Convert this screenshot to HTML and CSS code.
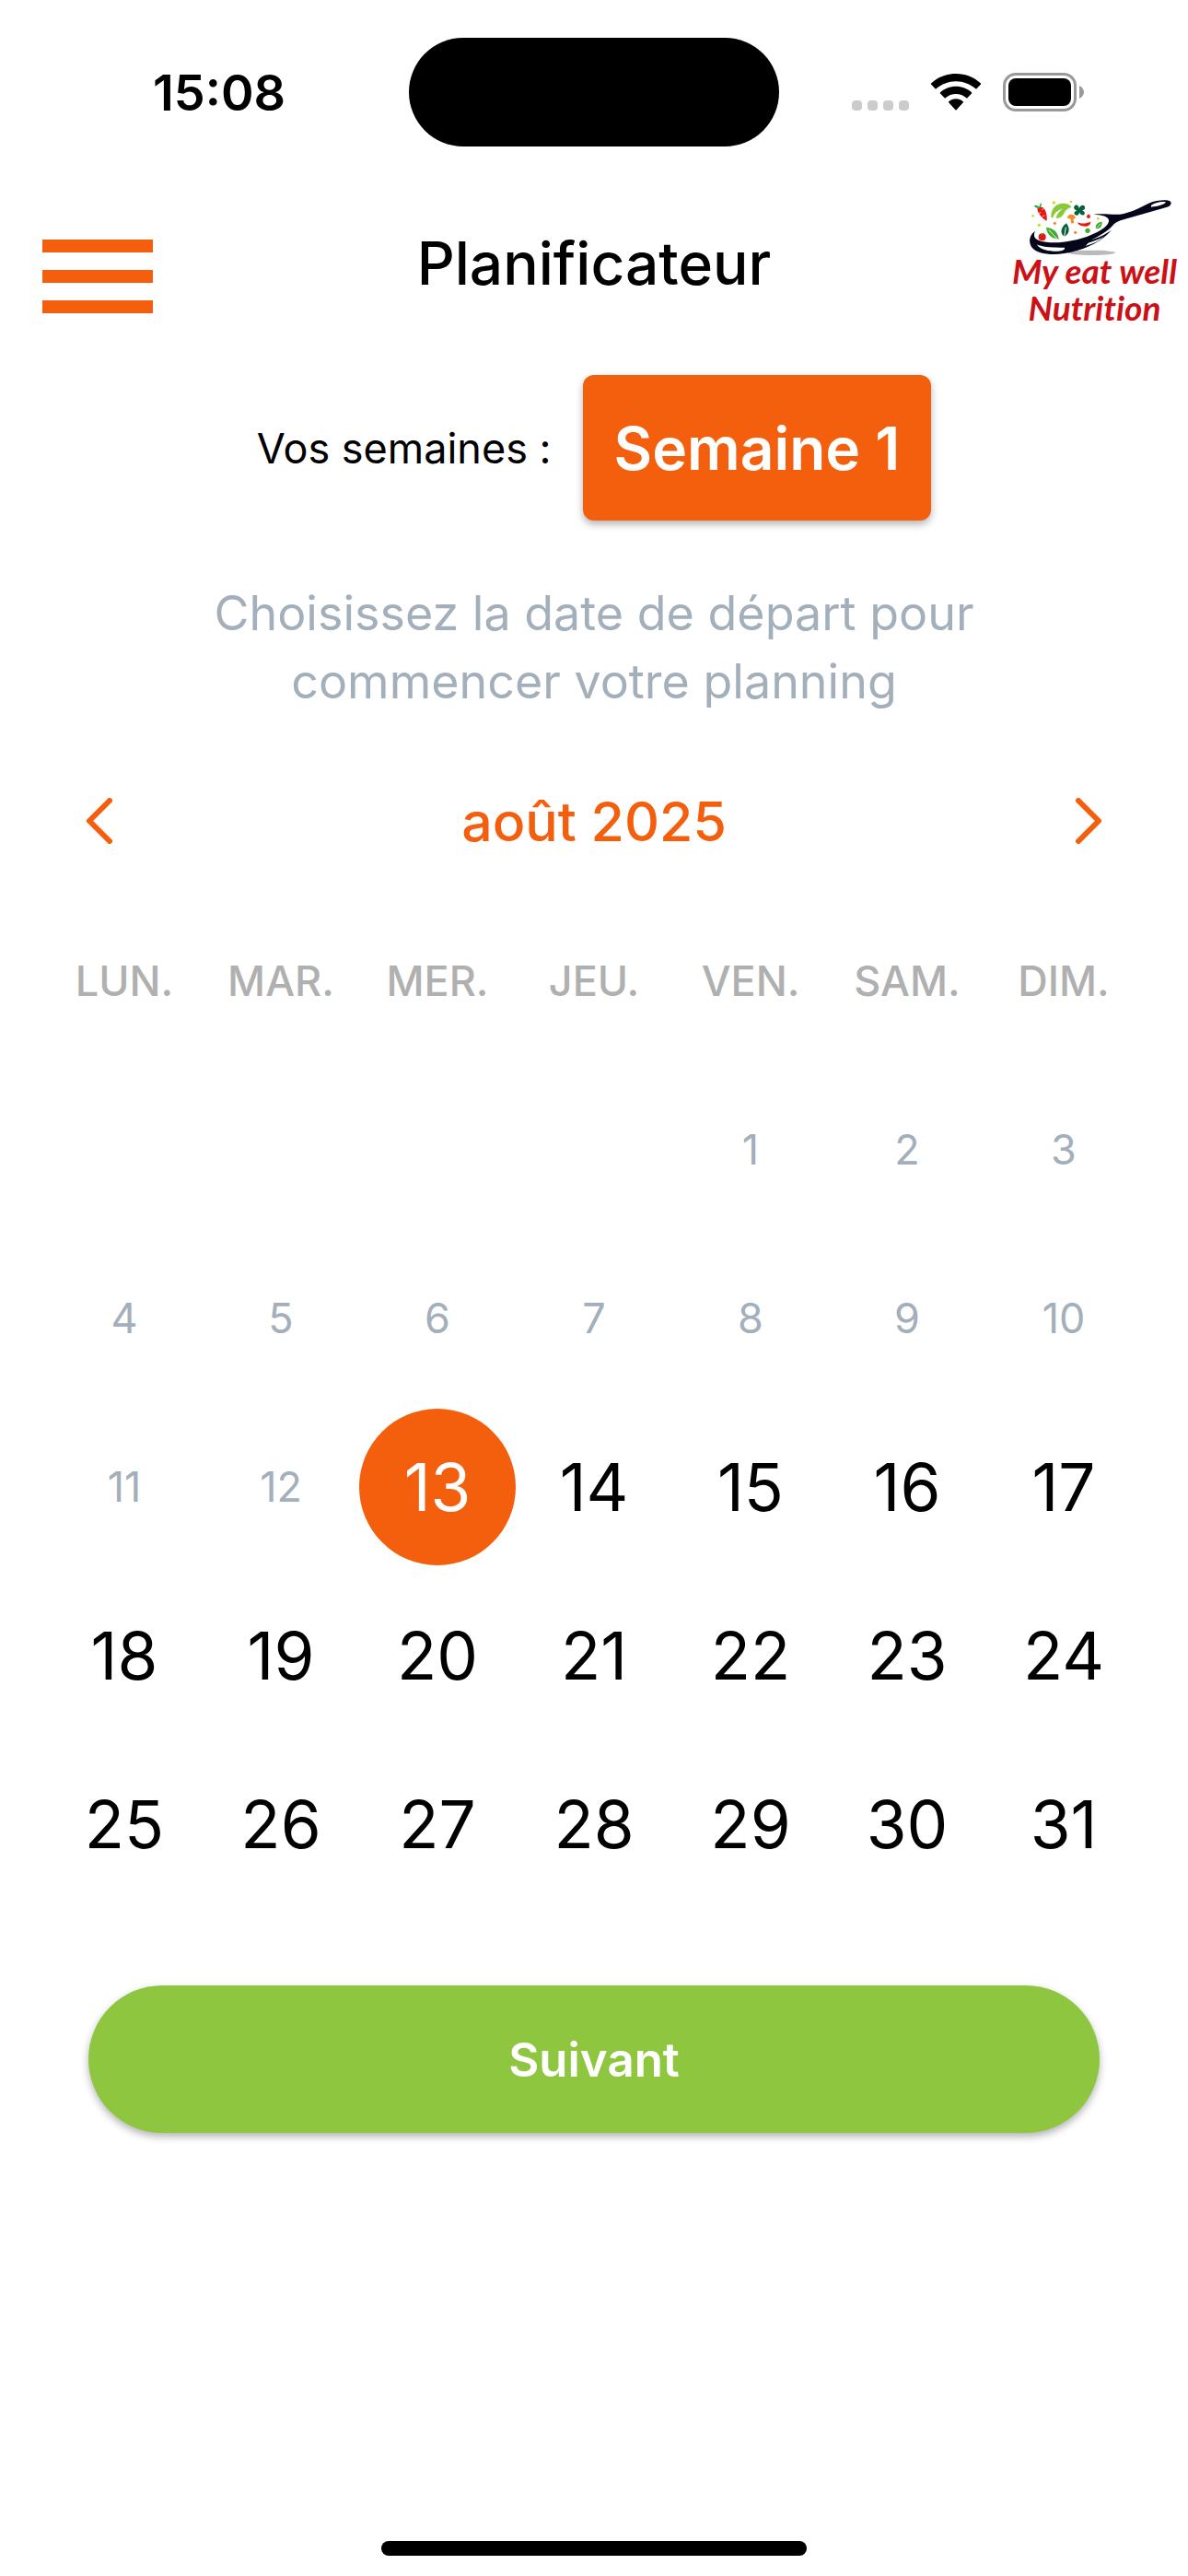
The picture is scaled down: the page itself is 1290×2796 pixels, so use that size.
FILE: index.html
```html
<!DOCTYPE html>
<html lang="fr">
    <head>
        <meta charset="UTF-8">
        <meta name="viewport" content="width=device-width, initial-scale=1">
        <title>Planificateur</title>
        <link rel="stylesheet" href="styles.css">
    </head>

    <body>
        <div class="statusbar">
            <span class="time">15:08</span>
            <div class="island"></div>
            <div class="status-icons">
                <svg class="signal" width="62" height="12" viewBox="0 0 62 12">
                    <rect x="0" width="11" height="11" rx="4"/>
                    <rect x="17" width="11" height="11" rx="4"/>
                    <rect x="34" width="11" height="11" rx="4"/>
                    <rect x="51" width="11" height="11" rx="4"/>
                </svg>
                <svg width="54" height="40" viewBox="0 0 54 40">
                    <path d="M27 0C16.500 0 7 4 0 10.500Q-.5 11 0 11.500L4.500 16.300Q5 16.800 5.600 16.300C11.500 11.200 19 8.200 27 8.200S42.500 11.200 48.400 16.300Q49 16.800 49.500 16.300L54 11.500Q54.500 11 54 10.500C47 4 37.500 0 27 0Z"/>
                    <path d="M27 13.700C20.500 13.700 14.500 16.100 10 20.200Q9.400 20.800 10 21.400L14.600 26.200Q15.100 26.700 15.700 26.200C18.800 23.600 22.700 22 27 22S35.200 23.600 38.300 26.200Q38.900 26.700 39.400 26.200L44 21.400Q44.600 20.800 44 20.200C39.500 16.100 33.500 13.700 27 13.700Z"/>
                    <path d="M27 27.300C24 27.300 21.300 28.300 19.200 30.200Q18.600 30.700 19.200 31.300L26.400 39.300Q27 39.900 27.600 39.300L34.800 31.300Q35.400 30.700 34.800 30.200C32.700 28.300 30 27.300 27 27.300Z"/>
                </svg>
                <svg width="88" height="42" viewBox="0 0 88 42">
                    <rect class="battery-case" x="1.500" y="1.500" width="77" height="39" rx="12.500"/>
                    <rect x="6" y="6" width="68" height="30" rx="8"/>
                    <path class="battery-tip" d="M83 14C86 15.500 88 18 88 21S86 26.500 83 28Z"/>
                </svg>
            </div>
        </div>

        <header>
            <button class="menu" type="button" aria-label="Menu">
                <span></span>
                <span></span>
                <span></span>
            </button>
            <h1>Planificateur</h1>
            <a class="logo" href="#">
                <svg width="157" height="62" viewBox="115 44 471 186">
                    <ellipse cx="320" cy="219" rx="77" ry="8" fill="#b9babc"/>
                    <!-- pan -->
                    <path fill="#04061a" d="M136 149C117 160 113 186 126 202C142 221 185 229 232 221C295 210 350 187 386 144C366 160 341 171 317 178C345 165 371 149 386 133C394 124 402 118 414 114L566 70C581 66 583 52 571 49C555 46 526 49 509 57C476 73 446 90 412 94C388 96 360 91 326 94C350 95 372 99 376 112C379 128 353 147 318 161C272 181 210 190 172 184C136 180 127 167 136 149Z"/>
                    <path fill="#fff" d="M142 192C158 201 197 203 232 202C235 211 218 215 196 214C170 213 149 206 142 192Z"/>
                    <path fill="#fff" d="M309 187C330 181 348 174 362 165C346 180 325 191 300 197Z"/>
                    <path fill="#fff" d="M514 64C530 55 546 51 562 54C558 63 534 68 514 70Z"/>
                    <!-- carrot -->
                    <path fill="#e8180f" d="M143 76C152 66 164 70 168 79C174 91 175 103 174 115C160 107 146 94 143 76Z"/>
                    <path d="M147 91L155 88M159 101L168 97M158 78L165 76" stroke="#fff" stroke-width="2"/>
                    <path fill="#22a83a" d="M132 66C139 64 145 66 150 70C149 63 153 58 159 57C156 61 155 66 155 71C147 76 138 74 132 66Z"/>
                    <!-- lettuce -->
                    <path fill="#8ac83c" d="M188 105C187 79 199 62 222 59C237 57 248 62 255 70C240 75 236 80 231 89C225 103 213 108 203 106C208 92 215 82 226 76C210 80 198 89 194 105Z"/>
                    <!-- parsley -->
                    <path fill="#06603a" d="M278 79C265 85 258 71 266 65C273 61 280 68 278 75C286 61 296 62 298 70C300 79 291 82 282 80C292 80 300 86 297 93C294 100 283 97 280 87C280 98 270 100 265 94C260 88 268 80 278 79Z"/>
                    <!-- mushroom -->
                    <path fill="#f58b22" d="M240 106C242 95 254 91 263 97C270 102 267 109 260 109L263 121L254 124L252 110C248 106 245 107 240 106Z"/>
                    <!-- chilli -->
                    <path fill="#e8180f" d="M275 120C290 127 302 123 317 118C317 131 302 136 289 132C280 130 275 126 275 120Z"/>
                    <circle cx="310" cy="101" r="6" fill="#e8180f"/>
                    <path d="M310 93V98" stroke="#e8180f" stroke-width="3"/>
                    <!-- leaves -->
                    <path fill="#3fae2f" d="M172 136C197 139 211 153 213 175C189 173 174 159 172 136Z"/>
                    <path d="M181 145L208 174" stroke="#fff" stroke-width="3"/>
                    <path fill="#06603a" d="M238 123C250 141 249 156 231 167C216 154 219 137 238 123Z"/>
                    <path d="M236 136L231 167" stroke="#fff" stroke-width="3"/>
                    <path fill="#3fae2f" d="M354 118C355 133 348 141 334 141C331 129 338 119 354 118Z"/>
                    <path d="M350 124L336 139" stroke="#fff" stroke-width="2"/>
                    <!-- tomato -->
                    <circle cx="159" cy="168" r="12" fill="#e8180f"/>
                    <path d="M153 158L160 160L166 154" fill="none" stroke="#22a83a" stroke-width="3"/>
                    <circle cx="307" cy="147" r="8" fill="#3fae2f"/>
                    <g fill="#f58b22">
                        <circle cx="200" cy="123" r="5"/>
                        <circle cx="267" cy="153" r="5"/>
                    </g>
                    <g fill="#c3d92e">
                        <circle cx="197" cy="56" r="5"/>
                        <circle cx="253" cy="53" r="4"/>
                        <circle cx="129" cy="99" r="4"/>
                        <circle cx="149" cy="129" r="5"/>
                        <circle cx="341" cy="108" r="4"/>
                    </g>
                </svg>
                <span>My eat well</span>
                <span>Nutrition</span>
            </a>
        </header>

        <main>
            <div class="weeks">
                <span>Vos semaines :</span>
                <button class="week" type="button">Semaine 1</button>
            </div>

            <p class="hint">Choisissez la date de départ pour commencer votre planning</p>

            <div class="month">
                <button type="button" aria-label="Mois précédent">
                    <svg width="30" height="50" viewBox="0 0 30 50"><path d="M26 3L4 25L26 47"/></svg>
                </button>
                <h2>août 2025</h2>
                <button type="button" aria-label="Mois suivant">
                    <svg width="30" height="50" viewBox="0 0 30 50"><path d="M4 3L26 25L4 47"/></svg>
                </button>
            </div>

            <table>
                <thead>
                    <tr><th>LUN.</th><th>MAR.</th><th>MER.</th><th>JEU.</th><th>VEN.</th><th>SAM.</th><th>DIM.</th></tr>
                </thead>
                <tbody>
                    <tr>
                        <td></td>
                        <td></td>
                        <td></td>
                        <td></td>
                        <td><button type="button" disabled>1</button></td>
                        <td><button type="button" disabled>2</button></td>
                        <td><button type="button" disabled>3</button></td>
                    </tr>
                    <tr>
                        <td><button type="button" disabled>4</button></td>
                        <td><button type="button" disabled>5</button></td>
                        <td><button type="button" disabled>6</button></td>
                        <td><button type="button" disabled>7</button></td>
                        <td><button type="button" disabled>8</button></td>
                        <td><button type="button" disabled>9</button></td>
                        <td><button type="button" disabled>10</button></td>
                    </tr>
                    <tr>
                        <td><button type="button" disabled>11</button></td>
                        <td><button type="button" disabled>12</button></td>
                        <td><button type="button" class="selected">13</button></td>
                        <td><button type="button">14</button></td>
                        <td><button type="button">15</button></td>
                        <td><button type="button">16</button></td>
                        <td><button type="button">17</button></td>
                    </tr>
                    <tr>
                        <td><button type="button">18</button></td>
                        <td><button type="button">19</button></td>
                        <td><button type="button">20</button></td>
                        <td><button type="button">21</button></td>
                        <td><button type="button">22</button></td>
                        <td><button type="button">23</button></td>
                        <td><button type="button">24</button></td>
                    </tr>
                    <tr>
                        <td><button type="button">25</button></td>
                        <td><button type="button">26</button></td>
                        <td><button type="button">27</button></td>
                        <td><button type="button">28</button></td>
                        <td><button type="button">29</button></td>
                        <td><button type="button">30</button></td>
                        <td><button type="button">31</button></td>
                    </tr>
                </tbody>
            </table>

            <button class="next" type="submit">Suivant</button>
        </main>

        <div class="home-bar"></div>
    </body>
</html>
```
FILE: styles.css
```css
* {
    box-sizing: border-box;
}

body {
    margin: 0;
    min-height: 100vh;
    display: flex;
    flex-direction: column;
    background-color: #fff;
    color: #000;
    font-family: Inter, "Liberation Sans", sans-serif;
}

button {
    margin: 0;
    padding: 0;
    border: none;
    background: none;
    color: inherit;
    font-family: inherit;
    cursor: pointer;
}

svg {
    display: block;
}

/* Style the status bar */
.statusbar {
    display: grid;
    grid-template-columns: 1fr 402px 1fr;
    align-items: center;
    padding-top: 41px;
}

.time {
    padding-left: 32px;
    text-align: center;
    font-size: 54px;
    font-weight: 600;
}

.island {
    height: 118px;
    border-radius: 59px;
    background-color: #000;
}

.status-icons {
    display: flex;
    justify-content: center;
    align-items: center;
    gap: 24px;
    padding-right: 34px;
}

.signal {
    align-self: flex-end;
    fill: #ccc;
}

.battery-case {
    fill: none;
    stroke: #999;
    stroke-width: 3;
}

.battery-tip {
    fill: #999;
}

/* Style the page header */
header {
    display: grid;
    grid-template-columns: 1fr auto 1fr;
    align-items: center;
    padding: 57px 12px 0;
}

.menu {
    display: flex;
    flex-direction: column;
    justify-content: space-between;
    width: 120px;
    height: 80px;
    margin: 30px 0 0 34px;
}

.menu span {
    width: 100%;
    height: 14px;
    background-color: #f35f0c;
}

h1 {
    margin: 0;
    font-size: 64px;
    font-weight: 500;
}

.logo {
    justify-self: end;
    display: flex;
    flex-direction: column;
    align-items: center;
    color: #cc1116;
    font-family: Lato, sans-serif;
    font-size: 37px;
    font-weight: 700;
    font-style: italic;
    font-variant-ligatures: none;
    line-height: 40px;
    text-decoration: none;
}

.logo svg {
    align-self: flex-end;
    margin: 0 4px -4px 0;
}

/* Style the planner */
main {
    display: flex;
    flex-direction: column;
    padding: 53px 50px 0;
}

.weeks {
    display: flex;
    justify-content: center;
    align-items: center;
    gap: 34px;
    font-size: 45px;
}

.week {
    height: 158px;
    padding: 0 34px;
    border-radius: 12px;
    background-color: #f35f0c;
    box-shadow: 0 4px 8px rgba(0, 0, 0, 0.3);
    color: #fff;
    font-size: 64px;
    font-weight: 600;
}

.hint {
    max-width: 960px;
    margin: 64px auto 0;
    color: #a3afbb;
    font-size: 52px;
    line-height: 74px;
    text-align: center;
}

/* Style the month selector */
.month {
    display: flex;
    justify-content: space-between;
    align-items: center;
    height: 100px;
    margin-top: 64px;
    padding: 0 43px;
    color: #f35f0c;
}

.month path {
    fill: none;
    stroke: #f35f0c;
    stroke-width: 6;
    stroke-linecap: round;
    stroke-linejoin: round;
}

h2 {
    margin: 0;
    font-size: 59px;
    font-weight: 500;
}

/* Style the calendar */
table {
    width: 100%;
    margin-top: 32px;
    table-layout: fixed;
    border-collapse: collapse;
}

th,
td {
    height: 183px;
    padding: 0;
    text-align: center;
    vertical-align: middle;
}

th {
    color: #b0b0b0;
    font-size: 45px;
    font-weight: 500;
}

td button {
    width: 170px;
    height: 170px;
    border-radius: 50%;
    font-size: 71px;
}

td button:disabled {
    color: #a3afbb;
    font-size: 45px;
    cursor: default;
}

td .selected {
    background-color: #f35f0c;
    color: #fff;
}

.next {
    height: 160px;
    margin: 84px 46px 60px;
    border-radius: 80px;
    background-color: #8ec73f;
    box-shadow: 0 4px 8px rgba(0, 0, 0, 0.3);
    color: #fff;
    font-size: 51px;
    font-weight: 600;
}

.home-bar {
    width: 462px;
    height: 16px;
    margin: auto auto 22px;
    border-radius: 8px;
    background-color: #000;
}
```
